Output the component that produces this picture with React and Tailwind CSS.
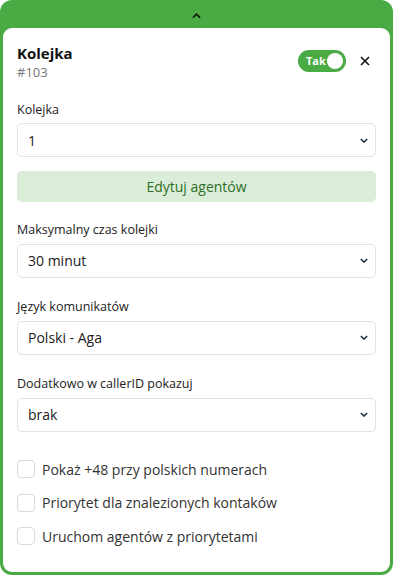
import { useState } from 'react';

const Chevron = ({ className }) => (
    <svg viewBox="0 0 10 6" className={className} fill="none" stroke="currentColor" strokeWidth="1.8">
        <path d="M1 1l4 4 4-4" />
    </svg>
);

const SelectField = ({ label, value }) => (
    <div>
        <div className="text-[12.5px] text-[#222] leading-none mb-[7px]">{label}</div>
        <div className="h-[34px] border border-[#e3e3e3] rounded-[5px] flex items-center justify-between pl-[10px] pr-[7px]">
            <span className="text-[14px] text-[#222]">{value}</span>
            <Chevron className="w-[8px] h-[5px] text-[#1b2a3a]" />
        </div>
    </div>
);

const CheckRow = ({ label, checked, onChange }) => (
    <label className="flex items-center gap-[7px] cursor-pointer">
        <input type="checkbox" className="hidden" checked={checked} onChange={onChange} />
        <span className="w-[18px] h-[18px] border border-[#d9d9d9] rounded-[4px] bg-white"></span>
        <span className="text-[14px] text-[#333]">{label}</span>
    </label>
);

const App = () => {
    const [checks, setChecks] = useState([false, false, false]);
    const toggle = (i) => setChecks((prev) => prev.map((c, j) => (j === i ? !c : c)));

    return (
        <div className="w-[393px] h-[577px] bg-white font-['Open_Sans',sans-serif]">
            <div className="h-[575px] bg-[#4aab44] rounded-[12px] px-[3px] pb-[3px] flex flex-col">
                <div className="h-[28px] flex items-center justify-center pt-[3px]">
                    <Chevron className="w-[9px] h-[6px] rotate-180 text-[#111]" />
                </div>
                <div className="flex-1 bg-white rounded-[9px] px-[14px] pt-[15px]">
                    <div className="flex items-start justify-between">
                        <div>
                            <h1 className="text-[15px] font-bold text-[#111] leading-[20px]">Kolejka</h1>
                            <div className="text-[13px] text-[#777]">#103</div>
                        </div>
                        <div className="flex items-center gap-[14px] mt-[7px] mr-[6px]">
                            <div className="w-[48px] h-[22px] rounded-full bg-[#4aab44] flex items-center justify-between pl-[8px] pr-[3px]">
                                <span className="text-[11px] font-bold text-white">Tak</span>
                                <span className="w-[16px] h-[16px] rounded-full bg-white"></span>
                            </div>
                            <svg viewBox="0 0 10 10" className="w-[10px] h-[10px]" stroke="#111" strokeWidth="1.6">
                                <path d="M1 1l8 8M9 1l-8 8" />
                            </svg>
                        </div>
                    </div>

                    <div className="mt-[21px]">
                        <SelectField label="Kolejka" value="1" />
                    </div>
                    <button className="mt-[14px] w-full h-[31px] rounded-[5px] bg-[#dbedd8] text-[14px] text-[#2f6f2a]">
                        Edytuj agentów
                    </button>
                    <div className="mt-[22px] flex flex-col gap-[23.5px]">
                        <SelectField label="Maksymalny czas kolejki" value="30 minut" />
                        <SelectField label="Język komunikatów" value="Polski - Aga" />
                        <SelectField label="Dodatkowo w callerID pokazuj" value="brak" />
                    </div>
                    <div className="mt-[27px] flex flex-col gap-[12.5px]">
                        <CheckRow label="Pokaż +48 przy polskich numerach" checked={checks[0]} onChange={() => toggle(0)} />
                        <CheckRow label="Priorytet dla znalezionych kontaków" checked={checks[1]} onChange={() => toggle(1)} />
                        <CheckRow label="Uruchom agentów z priorytetami" checked={checks[2]} onChange={() => toggle(2)} />
                    </div>
                </div>
            </div>
        </div>
    );
};

export default App;
